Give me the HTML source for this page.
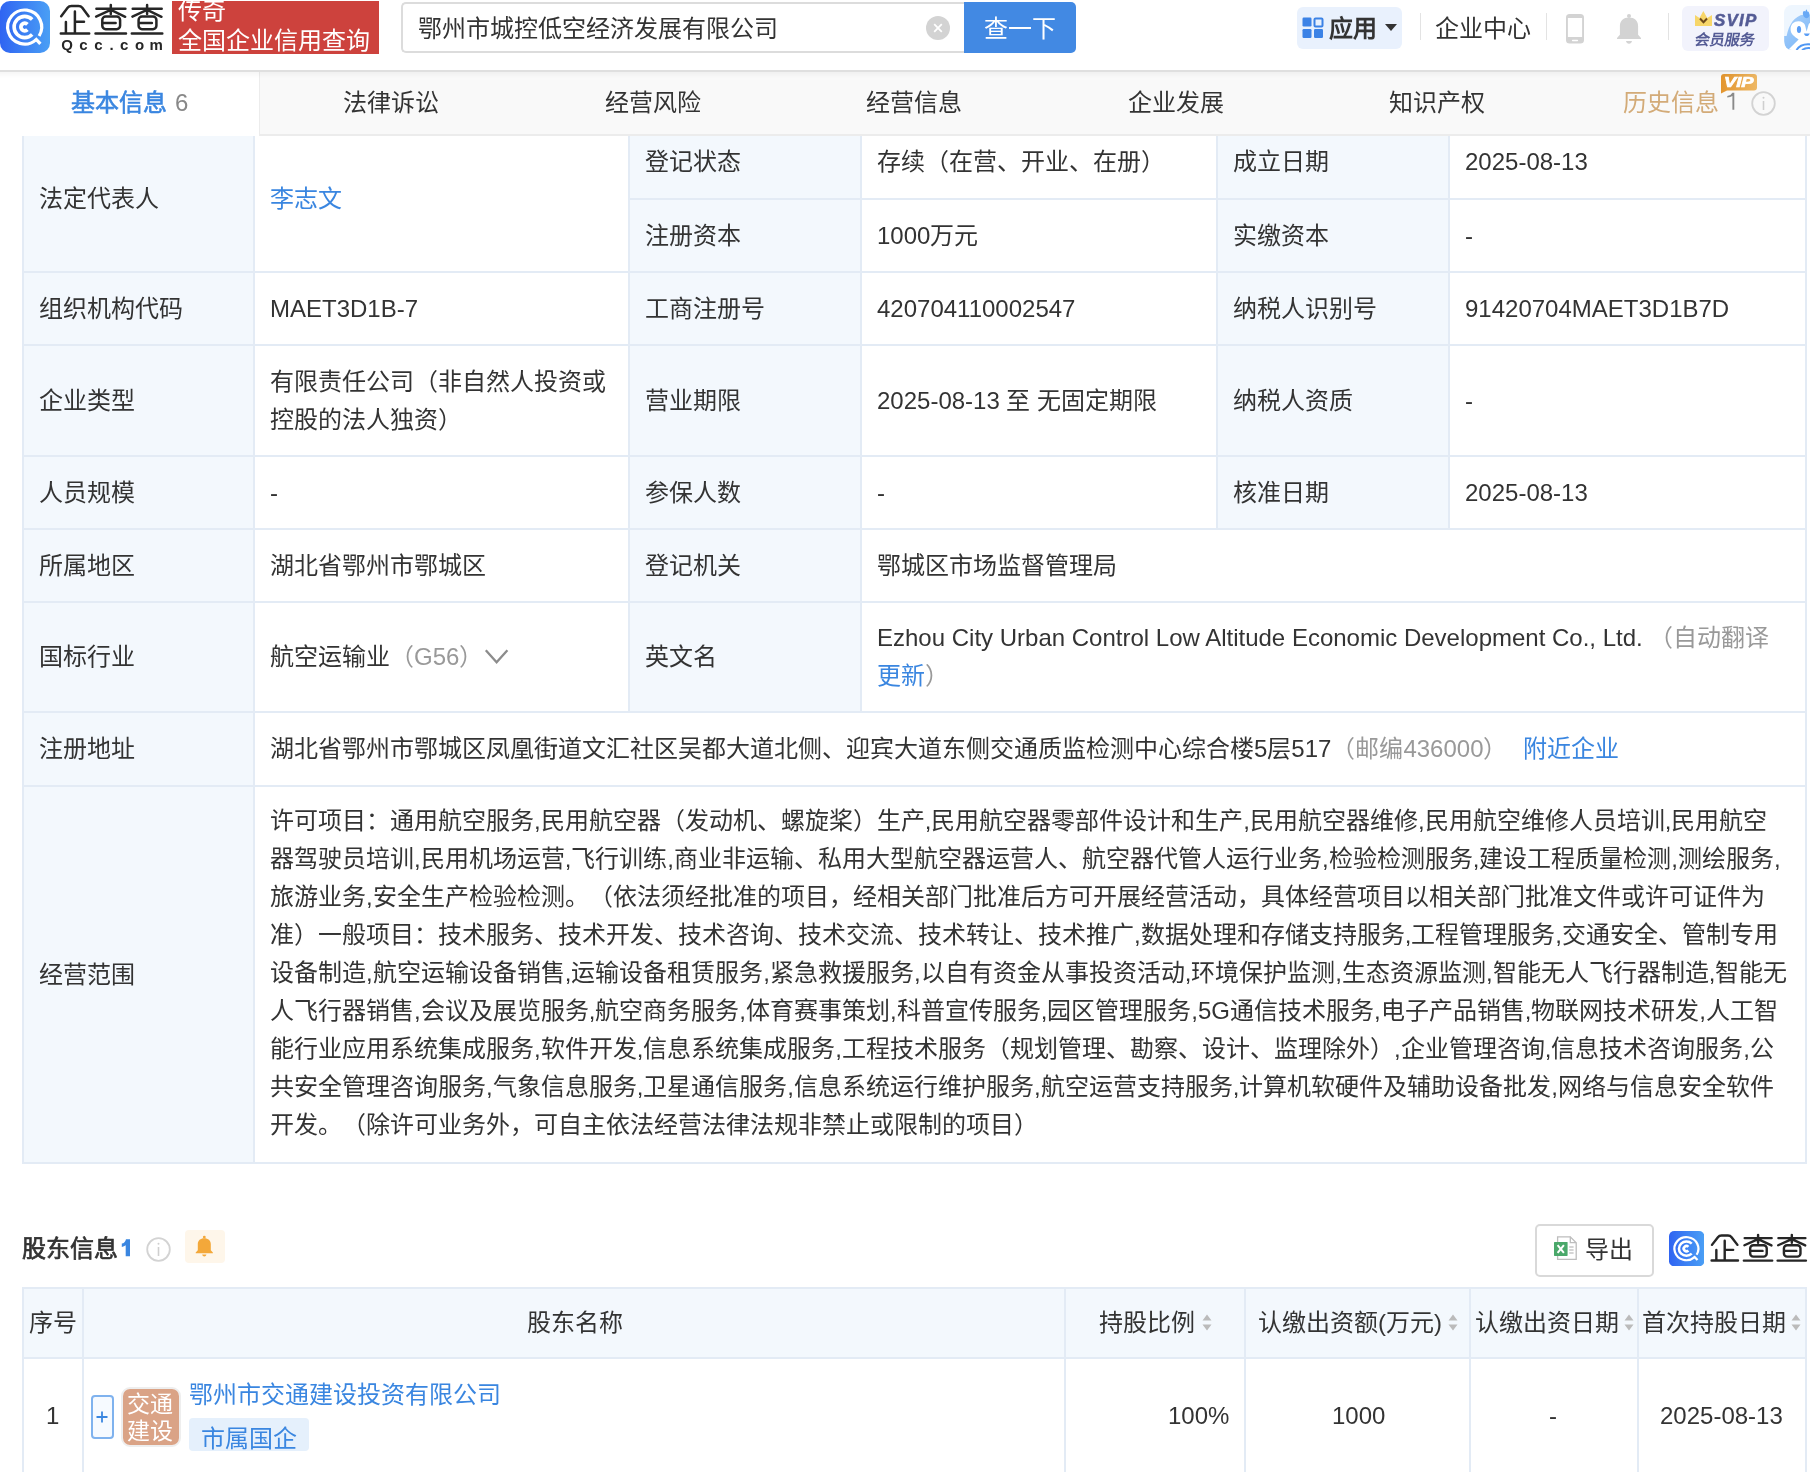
<!DOCTYPE html>
<html lang="zh-CN">
<head>
<meta charset="utf-8">
<style>
*{box-sizing:border-box;margin:0;padding:0}
html,body{width:1810px;height:1472px;overflow:hidden;background:#fff}
body{position:relative;font-family:"Liberation Sans",sans-serif;font-size:24px;color:#333}
.a{position:absolute}
.nw{white-space:nowrap}
/* header */
#hdr{position:absolute;left:0;top:0;width:1810px;height:70px;background:#fff}
#hdrline{position:absolute;left:0;top:70px;width:1810px;height:2px;background:#dfdfdf;z-index:2}
#hdrsh{position:absolute;left:0;top:72px;width:1810px;height:6px;background:linear-gradient(rgba(0,0,0,0.035),rgba(0,0,0,0));z-index:2}
#tabs{position:absolute;left:0;top:72px;width:1810px;height:64px;background:#f9f9f9;border-bottom:2px solid #ececec}
.tab{position:absolute;top:0;height:62px;line-height:62px;font-size:24px;color:#333;white-space:nowrap}
/* table */
.ln{position:absolute;background:#e3ebf5}
.lb{position:absolute;background:#f3f8fd}
.c{position:absolute;display:flex;align-items:center;line-height:38px;white-space:nowrap}
.blue{color:#3a86e0}
.gray{color:#999}
body{text-spacing-trim:space-all}
</style>
</head>
<body><div style="position:absolute;left:0;top:0;width:1810px;height:1472px;will-change:transform">
<!-- ================= TABLE (under tabs) ================= -->
<div id="tbl">
  <!-- white bg -->
  <div class="a" style="left:22px;top:126px;width:1785px;height:1038px;background:#fff"></div>
  <!-- label backgrounds -->
  <div class="lb" style="left:24px;top:126px;width:229px;height:1036px"></div>
  <div class="lb" style="left:630px;top:126px;width:230px;height:585px"></div>
  <div class="lb" style="left:1218px;top:126px;width:230px;height:402px"></div>
  <!-- vertical lines -->
  <div class="ln" style="left:22px;top:126px;width:2px;height:1038px"></div>
  <div class="ln" style="left:253px;top:126px;width:2px;height:1038px"></div>
  <div class="ln" style="left:628px;top:126px;width:2px;height:585px"></div>
  <div class="ln" style="left:860px;top:126px;width:2px;height:585px"></div>
  <div class="ln" style="left:1216px;top:126px;width:2px;height:402px"></div>
  <div class="ln" style="left:1448px;top:126px;width:2px;height:402px"></div>
  <div class="ln" style="left:1805px;top:126px;width:2px;height:1038px"></div>
  <!-- horizontal lines -->
  <div class="ln" style="left:628px;top:198px;width:1179px;height:2px"></div>
  <div class="ln" style="left:22px;top:271px;width:1785px;height:2px"></div>
  <div class="ln" style="left:22px;top:344px;width:1785px;height:2px"></div>
  <div class="ln" style="left:22px;top:455px;width:1785px;height:2px"></div>
  <div class="ln" style="left:22px;top:528px;width:1785px;height:2px"></div>
  <div class="ln" style="left:22px;top:601px;width:1785px;height:2px"></div>
  <div class="ln" style="left:22px;top:711px;width:1785px;height:2px"></div>
  <div class="ln" style="left:22px;top:785px;width:1785px;height:2px"></div>
  <div class="ln" style="left:22px;top:1162px;width:1785px;height:2px"></div>

  <!-- row 1 -->
  <div class="c" style="left:39px;top:126px;height:145px">法定代表人</div>
  <div class="c blue" style="left:270px;top:126px;height:145px">李志文</div>
  <div class="c" style="left:645px;top:126px;height:72px">登记状态</div>
  <div class="c" style="left:877px;top:126px;height:72px">存续（在营、开业、在册）</div>
  <div class="c" style="left:1233px;top:126px;height:72px">成立日期</div>
  <div class="c" style="left:1465px;top:126px;height:72px">2025-08-13</div>
  <div class="c" style="left:645px;top:200px;height:71px">注册资本</div>
  <div class="c" style="left:877px;top:200px;height:71px">1000万元</div>
  <div class="c" style="left:1233px;top:200px;height:71px">实缴资本</div>
  <div class="c" style="left:1465px;top:200px;height:71px">-</div>
  <!-- row 2 -->
  <div class="c" style="left:39px;top:273px;height:71px">组织机构代码</div>
  <div class="c" style="left:270px;top:273px;height:71px">MAET3D1B-7</div>
  <div class="c" style="left:645px;top:273px;height:71px">工商注册号</div>
  <div class="c" style="left:877px;top:273px;height:71px">420704110002547</div>
  <div class="c" style="left:1233px;top:273px;height:71px">纳税人识别号</div>
  <div class="c" style="left:1465px;top:273px;height:71px">91420704MAET3D1B7D</div>
  <!-- row 3 -->
  <div class="c" style="left:39px;top:346px;height:109px">企业类型</div>
  <div class="c" style="left:270px;top:346px;height:109px;white-space:normal;width:350px">有限责任公司（非自然人投资或控股的法人独资）</div>
  <div class="c" style="left:645px;top:346px;height:109px">营业期限</div>
  <div class="c" style="left:877px;top:346px;height:109px">2025-08-13 至 无固定期限</div>
  <div class="c" style="left:1233px;top:346px;height:109px">纳税人资质</div>
  <div class="c" style="left:1465px;top:346px;height:109px">-</div>
  <!-- row 4 -->
  <div class="c" style="left:39px;top:457px;height:71px">人员规模</div>
  <div class="c" style="left:270px;top:457px;height:71px">-</div>
  <div class="c" style="left:645px;top:457px;height:71px">参保人数</div>
  <div class="c" style="left:877px;top:457px;height:71px">-</div>
  <div class="c" style="left:1233px;top:457px;height:71px">核准日期</div>
  <div class="c" style="left:1465px;top:457px;height:71px">2025-08-13</div>
  <!-- row 5 -->
  <div class="c" style="left:39px;top:530px;height:71px">所属地区</div>
  <div class="c" style="left:270px;top:530px;height:71px">湖北省鄂州市鄂城区</div>
  <div class="c" style="left:645px;top:530px;height:71px">登记机关</div>
  <div class="c" style="left:877px;top:530px;height:71px">鄂城区市场监督管理局</div>
  <!-- row 6 -->
  <div class="c" style="left:39px;top:603px;height:108px">国标行业</div>
  <div class="c" style="left:270px;top:603px;height:108px">航空运输业<span class="gray">（G56）</span><svg width="26" height="16" viewBox="0 0 26 16" style="margin-left:1px;position:relative;top:0px"><path d="M1.8 1.2 L12.6 13.2 L23.4 1.2" fill="none" stroke="#8c8c8c" stroke-width="2.3"/></svg></div>
  <div class="c" style="left:645px;top:603px;height:108px">英文名</div>
  <div class="c" style="left:877px;top:603px;height:108px"><div>Ezhou City Urban Control Low Altitude Economic Development Co., Ltd. <span class="gray">（自动翻译</span><br><span class="blue">更新</span><span class="gray">）</span></div></div>
  <!-- row 7 -->
  <div class="c" style="left:39px;top:713px;height:72px">注册地址</div>
  <div class="c" style="left:270px;top:713px;height:72px">湖北省鄂州市鄂城区凤凰街道文汇社区吴都大道北侧、迎宾大道东侧交通质监检测中心综合楼5层517<span class="gray">（邮编436000）</span><span class="blue" style="margin-left:16px">附近企业</span></div>
  <!-- row 8 -->
  <div class="c" style="left:39px;top:787px;height:375px">经营范围</div>
  <div class="a" style="left:270px;top:802px;line-height:38px;white-space:nowrap"><div class="sl" id="sl0">许可项目：通用航空服务,民用航空器（发动机、螺旋桨）生产,民用航空器零部件设计和生产,民用航空器维修,民用航空维修人员培训,民用航空</div><div class="sl" id="sl1">器驾驶员培训,民用机场运营,飞行训练,商业非运输、私用大型航空器运营人、航空器代管人运行业务,检验检测服务,建设工程质量检测,测绘服务,</div><div class="sl" id="sl2">旅游业务,安全生产检验检测。（依法须经批准的项目，经相关部门批准后方可开展经营活动，具体经营项目以相关部门批准文件或许可证件为</div><div class="sl" id="sl3">准）一般项目：技术服务、技术开发、技术咨询、技术交流、技术转让、技术推广,数据处理和存储支持服务,工程管理服务,交通安全、管制专用</div><div class="sl" id="sl4">设备制造,航空运输设备销售,运输设备租赁服务,紧急救援服务,以自有资金从事投资活动,环境保护监测,生态资源监测,智能无人飞行器制造,智能无</div><div class="sl" id="sl5">人飞行器销售,会议及展览服务,航空商务服务,体育赛事策划,科普宣传服务,园区管理服务,5G通信技术服务,电子产品销售,物联网技术研发,人工智</div><div class="sl" id="sl6">能行业应用系统集成服务,软件开发,信息系统集成服务,工程技术服务（规划管理、勘察、设计、监理除外）,企业管理咨询,信息技术咨询服务,公</div><div class="sl" id="sl7">共安全管理咨询服务,气象信息服务,卫星通信服务,信息系统运行维护服务,航空运营支持服务,计算机软硬件及辅助设备批发,网络与信息安全软件</div><div class="sl" id="sl8">开发。（除许可业务外，可自主依法经营法律法规非禁止或限制的项目）</div></div>
</div>

<!-- ================= HEADER ================= -->
<div id="hdr">
  <!-- logo icon -->
  <svg class="a" style="left:0;top:1px" width="50" height="52" viewBox="0 0 50 52">
    <defs><linearGradient id="lg" x1="0" y1="0" x2="1" y2="0"><stop offset="0" stop-color="#2f64f2"/><stop offset="1" stop-color="#4a9ff5"/></linearGradient></defs>
    <rect x="0" y="0" width="50" height="52" rx="10" fill="url(#lg)"/>
    <g fill="none" stroke="#fff" stroke-width="3.2" stroke-linecap="butt">
      <path d="M39.1 35 A17 17 0 1 0 35.85 38.83"/>
      <path d="M32.2 18.5 A10.6 10.6 0 1 0 32.2 33.5" stroke-width="3.6"/>
      <path d="M27.4 23.3 A3.8 3.8 0 1 0 27.4 28.7" stroke-width="3.8"/>
      <path d="M35.2 37.3 L40.4 42.8"/>
    </g>
  </svg>
  <svg class="a" style="left:56px;top:0" width="112" height="56" viewBox="56 0 112 56">
    <g fill="none" stroke="#262626" stroke-width="2.5" stroke-linecap="round" stroke-linejoin="round">
      <path d="M61.2 16.2 L67.6 7.8 Q69 5.9 71.5 5.9 L78.4 5.9 Q80.9 5.9 82.3 7.8 L88.6 16.2"/>
      <path d="M74.9 11.6 L74.9 32.6 M74.9 21.7 L84 21.7 M65.9 21.9 L65.9 32.6 M60.8 33.5 L89.2 33.5"/>
      <path d="M96.4 8.7 L125.4 8.7 M110.8 5.1 L110.8 14 M110.2 10.2 L96.1 16.6 M111.4 10.2 L125.2 16.8 M95.5 33.6 L126 33.6"/>
      <rect x="102.3" y="16.6" width="17.8" height="12.6" rx="3.4"/>
      <path d="M103 22.9 L115.6 22.9"/>
      <path d="M132.7 8.7 L161.7 8.7 M147.1 5.1 L147.1 14 M146.5 10.2 L132.4 16.6 M147.7 10.2 L161.5 16.8 M131.8 33.6 L162.3 33.6"/>
      <rect x="138.6" y="16.6" width="17.8" height="12.6" rx="3.4"/>
      <path d="M139.3 22.9 L151.9 22.9"/>
    </g>
    <g font-family="Liberation Sans" font-weight="bold" font-size="15" fill="#262626" text-anchor="middle">
      <text x="67.1" y="49.6">Q</text><text x="83.4" y="49.6">c</text><text x="98.4" y="49.6">c</text><text x="111.7" y="49.6">.</text><text x="124.2" y="49.6">c</text><text x="139.5" y="49.6">o</text><text x="156.2" y="49.6">m</text>
    </g>
  </svg>
  <!-- red banner -->
  <div class="a" style="left:172px;top:1px;width:207px;height:53px;background:#cd423d;overflow:hidden">
    <div class="a nw" style="left:6px;top:-9px;font-size:24px;line-height:38px;color:#fff">传奇</div>
    <div class="a nw" style="left:6px;top:21px;font-size:24px;line-height:38px;color:#fff">全国企业信用查询</div>
  </div>
  <!-- search -->
  <div class="a" style="left:401px;top:2px;width:570px;height:51px;border:2px solid #dcdcdc;border-right:none;border-radius:5px 0 0 5px;background:#fff"></div>
  <div class="a nw" style="left:418px;top:10px;line-height:38px;color:#333">鄂州市城控低空经济发展有限公司</div>
  <div class="a" style="left:926px;top:16px;width:24px;height:24px;border-radius:50%;background:#d3d3d3"></div>
  <svg class="a" style="left:926px;top:16px" width="24" height="24" viewBox="0 0 24 24"><path d="M8.2 8.2 L15.8 15.8 M15.8 8.2 L8.2 15.8" stroke="#fff" stroke-width="1.8"/></svg>
  <div class="a" style="left:964px;top:2px;width:112px;height:51px;background:#4289e3;border-radius:0 5px 5px 0"></div>
  <div class="a nw" style="left:984px;top:9.5px;line-height:38px;color:#fff">查一下</div>
  <!-- app button -->
  <div class="a" style="left:1297px;top:7px;width:105px;height:42px;background:#e9f1fd;border-radius:6px"></div>
  <svg class="a" style="left:1302px;top:17px" width="22" height="22" viewBox="0 0 22 22">
    <rect x="0.5" y="0.5" width="9" height="9" rx="1.2" fill="#3b82e6"/>
    <rect x="12.5" y="1.5" width="8" height="8" rx="1" fill="none" stroke="#3b82e6" stroke-width="2"/>
    <rect x="0.5" y="12" width="9" height="9" rx="1.2" fill="#3b82e6"/>
    <rect x="12" y="12" width="9" height="9" rx="1.2" fill="#3b82e6"/>
  </svg>
  <div class="a nw" style="left:1329px;top:9.5px;line-height:38px;font-weight:bold;color:#333">应用</div>
  <svg class="a" style="left:1385px;top:24px" width="12" height="7" viewBox="0 0 12 7"><path d="M0 0 L12 0 L6 7 Z" fill="#333"/></svg>
  <div class="a" style="left:1420px;top:13px;width:1px;height:27px;background:#e3e3e3"></div>
  <div class="a nw" style="left:1435px;top:9.5px;line-height:38px;color:#333">企业中心</div>
  <div class="a" style="left:1546px;top:13px;width:1px;height:27px;background:#e3e3e3"></div>
  <!-- phone -->
  <svg class="a" style="left:1566px;top:14px" width="18" height="30" viewBox="0 0 18 30">
    <rect x="0" y="0" width="18" height="29.6" rx="3.6" fill="#d3d3d3"/>
    <rect x="1.9" y="4" width="14.2" height="19" fill="#fff"/>
    <rect x="5.9" y="25.7" width="6.2" height="1.5" rx="0.7" fill="#fff"/>
  </svg>
  <!-- bell -->
  <svg class="a" style="left:1616px;top:13px" width="26" height="32" viewBox="0 0 26 32">
    <circle cx="13" cy="3" r="2" fill="#d3d3d3"/>
    <path d="M3.9 21.8 L3.9 13 C3.9 7.8 7.6 4.6 13 4.6 C18.4 4.6 22.1 7.8 22.1 13 L22.1 21.8 L25 25 L25 26 L1 26 L1 25 Z" fill="#d3d3d3"/>
    <path d="M10 28 L16 28 C15.6 29.8 14.5 30.8 13 30.8 C11.5 30.8 10.4 29.8 10 28 Z" fill="#d3d3d3"/>
  </svg>
  <div class="a" style="left:1668px;top:13px;width:1px;height:27px;background:#e3e3e3"></div>
  <!-- svip -->
  <div class="a" style="left:1682px;top:6px;width:87px;height:45px;background:#f2f3fc;border-radius:6px"></div>
  <svg class="a" style="left:1695px;top:11px" width="17" height="15" viewBox="0 0 17 15">
    <path d="M0 4 L4.5 7 L8.3 0 L12.3 7 L17 4 L17 15 L0 15 Z" fill="#f7d66a"/>
    <path d="M5 7.5 L8.5 11.2 L12 7.5" fill="none" stroke="#6e4a1c" stroke-width="2"/>
  </svg>
  <div class="a nw" style="left:1714px;top:8.5px;font-size:17px;line-height:24px;font-weight:bold;font-style:italic;color:#545b95;letter-spacing:1.2px;-webkit-text-stroke:0.5px #545b95">SVIP</div>
  <div class="a nw" style="left:1695px;top:29.5px;font-size:15px;line-height:20px;font-weight:bold;color:#545b95;transform:skewX(-10deg)">会员服务</div>
  <!-- avatar -->
  <div class="a" style="left:1784px;top:5px;width:40px;height:45px;background:#eef6fe;border-radius:8px;overflow:hidden">
    <svg class="a" style="left:0;top:0" width="40" height="45" viewBox="0 0 40 45">
      <defs><linearGradient id="pg" x1="0" y1="0" x2="1" y2="1"><stop offset="0" stop-color="#a9d0fa"/><stop offset="1" stop-color="#6fb0f7"/></linearGradient></defs>
      <path d="M0.2 31 L2.6 31 C5 20 10 11 20 9.6 L40 9.6 L40 45 L3.6 45 C2 43 0.3 40 0.2 36 Z" fill="url(#pg)"/>
      <path d="M6.6 24.5 C6.6 19 10 16.2 14.5 16.2 C18 16.2 20 18 21 20 L22.6 26.6 L24.6 19.4 C26 17 30 16 40 16 L40 45 L4 45 L14.6 34.6 C10 31 6.6 29 6.6 24.5 Z" fill="#fff"/>
      <ellipse cx="15" cy="24.5" rx="2.1" ry="3.5" fill="#5a9df5"/>
      <path d="M19 9.5 C18.5 7 19.5 5 21.5 6.5 C22 4.5 23 3.5 23.2 6.5 C25 6 26 9 25 11.5 C24 14 20 14 19 9.5 Z" fill="#68a9f6"/>
      <path d="M19.8 28.4 C21 31.8 24.5 31.8 25.8 28.4 Z" fill="#5a9df5"/>
      <path d="M12.5 45 C15 41 19 39.3 24 39.3 C30 39.3 36 41 40 44" fill="none" stroke="#4f97f4" stroke-width="2"/>
      <path d="M18 45 C21 43 26 42.5 30 44" fill="none" stroke="#4f97f4" stroke-width="2"/>
    </svg>
  </div>
</div>
<div id="hdrline"></div><div id="hdrsh"></div>
<div id="tabs">
  <div class="a" style="left:0;top:0;width:259px;height:64px;background:#fff"></div>
  <div class="a" style="left:259px;top:0;width:1px;height:64px;background:#ececec"></div>
  <div class="tab" style="left:71px;color:#3a86e0"><span style="-webkit-text-stroke:0.6px #3a86e0">基本信息</span><span style="color:#888;margin-left:8px">6</span></div>
  <div class="tab" style="left:343px">法律诉讼</div>
  <div class="tab" style="left:605px">经营风险</div>
  <div class="tab" style="left:866px">经营信息</div>
  <div class="tab" style="left:1128px">企业发展</div>
  <div class="tab" style="left:1389px">知识产权</div>
  <div class="tab" style="left:1623px;color:#d3ab78">历史信息</div>
  <svg class="a" style="left:1726px;top:19px" width="10" height="20" viewBox="0 0 10 20"><path d="M6.4 1.8 L8.3 1.8 L8.3 18.7 L6.4 18.7 L6.4 5 Q4.6 6.3 1.3 6.6 L1.3 5 Q5.2 4.4 6.4 1.8 Z" fill="#8a8a8a"/></svg>
  <svg class="a" style="left:1720px;top:1px" width="38" height="21" viewBox="0 0 38 21">
    <defs><linearGradient id="vg" x1="0" y1="0" x2="1" y2="0"><stop offset="0" stop-color="#e3952e"/><stop offset="1" stop-color="#eeb865"/></linearGradient></defs>
    <path d="M4 1 L34 1 Q37 1 37 4 L37 14.5 Q37 17.5 34 17.5 L7 17.5 L1 20.5 L1 4 Q1 1 4 1 Z" fill="url(#vg)"/>
    <text x="4" y="14.4" textLength="29.5" lengthAdjust="spacingAndGlyphs" font-family="Liberation Sans" font-weight="bold" font-style="italic" font-size="14.5" fill="#fff" stroke="#fff" stroke-width="0.7">VIP</text>
  </svg>
  <svg class="a" style="left:1751px;top:19px" width="25" height="25" viewBox="0 0 25 25">
    <circle cx="12.5" cy="12.5" r="11.3" fill="none" stroke="#d3d3d3" stroke-width="1.8"/>
    <rect x="11.7" y="10" width="1.6" height="9" fill="#cfcfcf"/>
    <circle cx="12.5" cy="6.7" r="1" fill="#cfcfcf"/>
  </svg>
</div>

<!-- ================= SHAREHOLDERS ================= -->
<div class="a nw" style="left:22px;top:1229.5px;line-height:38px;color:#333"><span style="-webkit-text-stroke:0.7px #333">股东信息</span></div>
<svg class="a" style="left:0;top:0;overflow:visible" width="1" height="1"><path d="M125.7 1239.2 L130 1239.2 L130 1256.2 L125.7 1256.2 L125.7 1245.3 Q124.2 1246.6 121.8 1246.9 L121.8 1243.6 Q125 1243 126 1239.2 Z" fill="#3a86e0"/></svg>
<svg class="a" style="left:146px;top:1237px" width="25" height="25" viewBox="0 0 25 25">
  <circle cx="12.5" cy="12.5" r="11.3" fill="none" stroke="#d3d3d3" stroke-width="1.8"/>
  <rect x="11.7" y="10" width="1.6" height="9" fill="#cfcfcf"/>
  <circle cx="12.5" cy="6.7" r="1" fill="#cfcfcf"/>
</svg>
<div class="a" style="left:185px;top:1230px;width:40px;height:33px;background:#fef6ea;border-radius:4px"></div>
<svg class="a" style="left:195.1px;top:1235.3px" width="18.6" height="22.4" viewBox="0 0 26 32" preserveAspectRatio="none">
  <circle cx="13" cy="3" r="2" fill="#f3a83a"/>
  <path d="M3.9 21.8 L3.9 13 C3.9 7.8 7.6 4.6 13 4.6 C18.4 4.6 22.1 7.8 22.1 13 L22.1 21.8 L25 25 L25 26 L1 26 L1 25 Z" fill="#f3a83a"/>
  <path d="M10 28 L16 28 C15.6 29.8 14.5 30.8 13 30.8 C11.5 30.8 10.4 29.8 10 28 Z" fill="#f3a83a"/>
</svg>
<!-- export -->
<div class="a" style="left:1535px;top:1224px;width:119px;height:53px;border:2px solid #d9d9d9;border-radius:5px;background:#fff"></div>
<svg class="a" style="left:1554px;top:1236px" width="24" height="25" viewBox="0 0 24 25">
  <path d="M3.6 0.8 L16.3 0.8 L22.2 6.8 L22.2 23.4 L3.6 23.4 Z" fill="#fff" stroke="#bdbdbd" stroke-width="1.3"/>
  <path d="M16.3 0.8 L16.3 6.6 L22.2 6.6" fill="none" stroke="#bdbdbd" stroke-width="1.3"/>
  <rect x="15.2" y="10.3" width="4.4" height="1.4" fill="#c4c4c4"/><rect x="15.2" y="13.3" width="4.4" height="1.4" fill="#c4c4c4"/><rect x="15.2" y="16.3" width="4.4" height="1.4" fill="#c4c4c4"/>
  <rect x="0" y="6" width="13.6" height="13.9" rx="0.6" fill="#4aa86a"/>
  <path d="M3.6 9.2 L9.9 16.8 M9.9 9.2 L3.6 16.8" stroke="#fff" stroke-width="2"/>
</svg>
<div class="a nw" style="left:1585px;top:1231px;line-height:38px;color:#333">导出</div>
<svg class="a" style="left:1669px;top:1231px" width="35.3" height="35.3" viewBox="0 0 50 52" preserveAspectRatio="none">
  <defs><linearGradient id="lg2" x1="0" y1="0" x2="1" y2="0"><stop offset="0" stop-color="#2f64f2"/><stop offset="1" stop-color="#4a9ff5"/></linearGradient></defs>
  <rect x="0" y="0" width="50" height="52" rx="7.5" fill="url(#lg2)"/>
  <g fill="none" stroke="#fff" stroke-width="3.2">
    <path d="M39.1 35 A17 17 0 1 0 35.85 38.83"/>
      <path d="M32.2 18.5 A10.6 10.6 0 1 0 32.2 33.5" stroke-width="3.6"/>
      <path d="M27.4 23.3 A3.8 3.8 0 1 0 27.4 28.7" stroke-width="3.8"/>
      <path d="M35.2 37.3 L40.4 42.8"/>
    </g>
</svg>
<svg class="a" style="left:1708.8px;top:1232.3px" width="100.4" height="30.8" viewBox="58 2 108 34" preserveAspectRatio="none"><g fill="none" stroke="#262626" stroke-width="2.6" stroke-linecap="round" stroke-linejoin="round">
      <path d="M61.2 16.2 L67.6 7.8 Q69 5.9 71.5 5.9 L78.4 5.9 Q80.9 5.9 82.3 7.8 L88.6 16.2"/>
      <path d="M74.9 11.6 L74.9 32.6 M74.9 21.7 L84 21.7 M65.9 21.9 L65.9 32.6 M60.8 33.5 L89.2 33.5"/>
      <path d="M96.4 8.7 L125.4 8.7 M110.8 5.1 L110.8 14 M110.2 10.2 L96.1 16.6 M111.4 10.2 L125.2 16.8 M95.5 33.6 L126 33.6"/>
      <rect x="102.3" y="16.6" width="17.8" height="12.6" rx="3.4"/>
      <path d="M103 22.9 L115.6 22.9"/>
      <path d="M132.7 8.7 L161.7 8.7 M147.1 5.1 L147.1 14 M146.5 10.2 L132.4 16.6 M147.7 10.2 L161.5 16.8 M131.8 33.6 L162.3 33.6"/>
      <rect x="138.6" y="16.6" width="17.8" height="12.6" rx="3.4"/>
      <path d="M139.3 22.9 L151.9 22.9"/>
    </g></svg>

<!-- table -->
<div class="a" style="left:22px;top:1287px;width:1785px;height:200px;background:#fff"></div>
<div class="lb" style="left:24px;top:1289px;width:1781px;height:68px"></div>
<div class="ln" style="left:22px;top:1287px;width:1785px;height:2px"></div>
<div class="ln" style="left:22px;top:1357px;width:1785px;height:2px"></div>
<div class="ln" style="left:22px;top:1287px;width:2px;height:200px"></div>
<div class="ln" style="left:82px;top:1287px;width:2px;height:200px"></div>
<div class="ln" style="left:1064px;top:1287px;width:2px;height:200px"></div>
<div class="ln" style="left:1244px;top:1287px;width:2px;height:200px"></div>
<div class="ln" style="left:1469px;top:1287px;width:2px;height:200px"></div>
<div class="ln" style="left:1637px;top:1287px;width:2px;height:200px"></div>
<div class="ln" style="left:1805px;top:1287px;width:2px;height:200px"></div>
<div class="c" style="left:29px;top:1289px;height:68px">序号</div>
<div class="c" style="left:527px;top:1289px;height:68px">股东名称</div>
<div class="c" style="left:1099px;top:1289px;height:68px">持股比例</div>
<div class="c" style="left:1258px;top:1289px;height:68px">认缴出资额(万元)</div>
<div class="c" style="left:1475px;top:1289px;height:68px">认缴出资日期</div>
<div class="c" style="left:1642px;top:1289px;height:68px">首次持股日期</div>
<svg class="a" style="left:1202px;top:1314px" width="10" height="17" viewBox="0 0 10 17"><path d="M5 0.5 L9.5 6.5 L0.5 6.5 Z M5 16.5 L9.5 10.5 L0.5 10.5 Z" fill="#bbb"/></svg>
<svg class="a" style="left:1448px;top:1314px" width="10" height="17" viewBox="0 0 10 17"><path d="M5 0.5 L9.5 6.5 L0.5 6.5 Z M5 16.5 L9.5 10.5 L0.5 10.5 Z" fill="#bbb"/></svg>
<svg class="a" style="left:1624px;top:1314px" width="10" height="17" viewBox="0 0 10 17"><path d="M5 0.5 L9.5 6.5 L0.5 6.5 Z M5 16.5 L9.5 10.5 L0.5 10.5 Z" fill="#bbb"/></svg>
<svg class="a" style="left:1791px;top:1314px" width="10" height="17" viewBox="0 0 10 17"><path d="M5 0.5 L9.5 6.5 L0.5 6.5 Z M5 16.5 L9.5 10.5 L0.5 10.5 Z" fill="#bbb"/></svg>

<div class="c" style="left:46px;top:1397px;height:38px">1</div>
<div class="a" style="left:91px;top:1395px;width:23px;height:44px;border:2px solid #7fb2ee;border-radius:4px;background:#f6faff"></div>
<svg class="a" style="left:95px;top:1410px" width="14" height="14" viewBox="0 0 14 14"><path d="M7 1.5 L7 12.5 M1.5 7 L12.5 7" stroke="#3a86e0" stroke-width="1.8"/></svg>
<div class="a" style="left:121px;top:1387px;width:60px;height:60px;border:2px solid #eee;border-radius:9px;background:#fff"></div>
<div class="a" style="left:123px;top:1389px;width:56px;height:56px;border-radius:7px;background:#daa386"></div>
<div class="a" style="left:127px;top:1390.5px;width:50px;font-size:23px;line-height:27px;color:#fff;white-space:normal;word-break:break-all">交通建设</div>
<div class="a nw blue" style="left:189px;top:1376px;line-height:38px">鄂州市交通建设投资有限公司</div>
<div class="a" style="left:189px;top:1418px;width:120px;height:33px;background:#e5f0fc;border-radius:4px"></div>
<div class="a nw blue" style="left:201px;top:1419.5px;line-height:38px">市属国企</div>
<div class="c" style="left:1168px;top:1397px;height:38px">100%</div>
<div class="c" style="left:1332px;top:1397px;height:38px">1000</div>
<div class="c" style="left:1549px;top:1397px;height:38px">-</div>
<div class="c" style="left:1660px;top:1397px;height:38px">2025-08-13</div>
</div></body>
</html>
